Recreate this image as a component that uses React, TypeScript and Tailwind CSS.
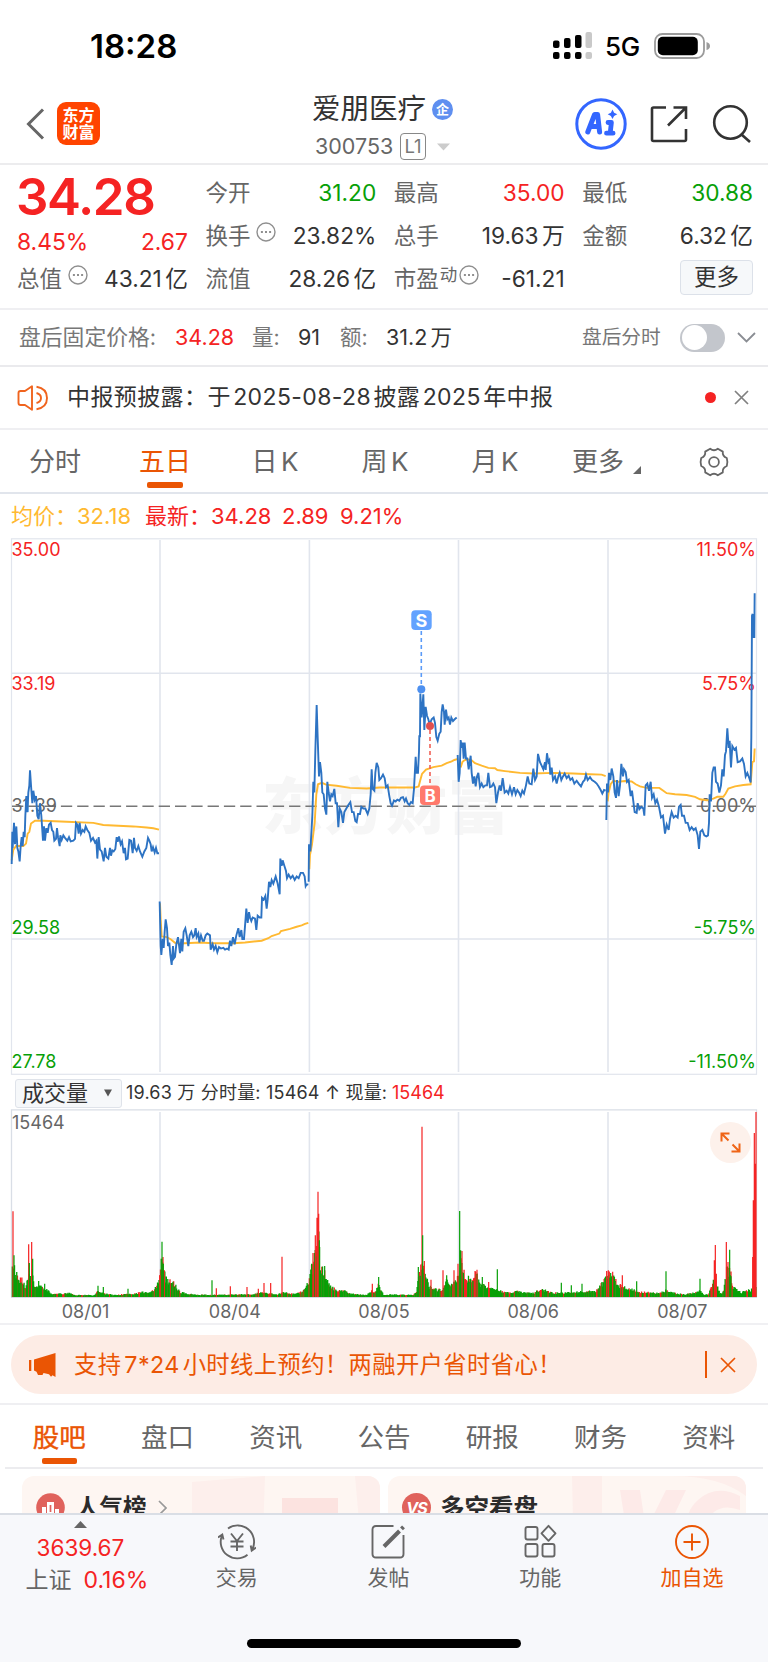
import type { ReactNode } from "react";

const RED = "#f52323";
const GREEN = "#07a007";

const chartTabs = ["分时", "五日", "日 K", "周 K", "月 K"];
const infoTabs = ["股吧", "盘口", "资讯", "公告", "研报", "财务", "资料"];
const days = ["08/01", "08/04", "08/05", "08/06", "08/07"];
const gridX = [160, 309.4, 458.5, 608];

// one entry per trading day: x offset, price line, average line
const series = [
  {
    dx: 0,
    price:
      "35,935 37,845 38,890 42,820 45,880 49,830 52,890 55,900 59,928 62,885 65,860 68,885 71,845 74,860 76,800 79,745 82,790 85,735 88,715 90,673 93,715 97,765 100,730 104,755 108,745 112,800 116,810 120,765 124,800 129,870 132,830 135,870 139,835 143,848 147,825 152,820 156,840 160,845 163,870 168,865 171,835 174,860 179,885 181,855 185,868 190,855 195,862 202,870 207,860 212,872 220,870 225,865 228,820 232,825 236,850 239,820 243,850 248,840 253,845 257,830 262,840 268,848 273,870 279,862 285,875 289,870 292,920 296,860 300,895 305,900 311,928 315,890 319,915 325,920 330,890 333,912 337,897 341,900 346,893 350,860 353,873 357,858 362,880 366,872 371,905 375,890 378,922 383,920 388,868 393,870 398,905 402,862 405,890 410,898 415,885 420,900 427,915 433,900 439,890 444,862 448,870 452,880 455,900 459,888 464,903 468,890 472,905 477,905",
    avg: "35,925 40,895 48,885 70,885 78,878 83,850 88,845 93,822 105,814 130,814 200,817 280,820 310,826 400,830 440,833 460,835 477,839",
  },
  {
    dx: 0,
    price:
      "479,1040 482,1165 484,1190 488,1145 491,1170 494,1125 497,1090 501,1115 504,1165 508,1155 511,1190 515,1218 519,1165 521,1200 525,1195 529,1160 534,1140 540,1185 544,1145 547,1180 551,1125 556,1115 560,1135 565,1165 569,1135 574,1125 579,1140 583,1135 587,1115 590,1140 595,1130 598,1155 603,1135 608,1150 612,1150 617,1135 622,1130 630,1135 632,1175 638,1160 642,1175 647,1165 652,1182 657,1168 663,1172 670,1170 675,1175 681,1172 686,1175 690,1150 694,1165 699,1140 704,1160 709,1135 715,1115 719,1140 724,1120 727,1145 732,1145 735,1110 739,1060 743,1100 747,1070 750,1085 754,1095 758,1085 765,1088 769,1120 773,1080 779,1085 784,1085 786,1030 791,1035 796,1025 800,1060 803,1035 807,985 811,1000 815,980 820,990 827,970 833,990 839,1020 841,920 845,940 848,925 853,940 858,955 861,975 866,965 872,975 878,968 884,980 890,970 896,975 902,960 909,960 914,970 917,997 920,992 925,993",
    avg: "480,1045 482,1090 485,1138 500,1140 512,1146 525,1156 540,1158 600,1155 640,1157 700,1157 735,1155 785,1150 805,1143 815,1137 838,1130 843,1123 870,1117 890,1111 905,1107 915,1103 925,1100",
  },
  {
    dx: 900,
    price:
      "26,985 27,880 31,900 34,850 37,800 40,705 43,735 46,620 50,490 53,580 57,690 60,650 64,680 67,735 71,740 75,780 79,797 82,705 86,735 90,760 94,740 98,745 103,725 107,765 111,765 115,832 119,780 124,790 129,820 133,790 139,780 145,770 151,762 156,790 161,790 166,815 170,818 174,795 180,795 184,775 190,780 196,780 203,795 208,780 212,740 215,670 218,725 223,730 226,680 230,652 235,665 238,700 243,695 249,685 254,695 258,720 263,715 268,745 272,765 276,772 282,757 287,760 292,755 298,758 303,750 309,748 314,760 318,752 323,765 328,770 333,762 338,765 342,725 347,635 350,680 354,680 357,620 358,575 360,580 361,458 365,525 370,460 373,560 377,495 381,520 385,530 389,545 395,530 401,525 405,540 409,580 413,590 418,570 422,565 425,510 428,488 432,510 434,545 438,503 442,530 446,525 450,545 454,525 459,535 464,530 470,525",
    avg: "28,950 30,910 36,880 44,820 49,740 54,712 66,708 78,713 110,716 150,722 200,724 240,721 280,721 345,721 356,718 361,700 366,683 378,671 400,664 425,660 440,653 455,648 463,644 474,641",
  },
  {
    dx: 900,
    price:
      "473,630 476,705 479,680 482,588 485,610 488,595 491,640 494,595 498,640 502,640 506,670 512,632 515,680 519,710 523,690 527,718 531,690 535,680 540,720 545,710 550,720 556,715 561,715 565,680 570,720 575,718 580,710 585,720 589,765 594,735 599,715 603,730 608,695 614,735 620,730 625,738 630,720 636,740 642,720 647,740 652,728 657,735 662,745 667,730 672,738 678,715 683,690 688,710 695,712 700,668 705,700 710,690 714,627 720,650 725,660 730,670 735,650 737,672 741,625 745,650 748,645 751,685 755,665 759,700 765,690 770,710 775,690 779,680 784,700 789,690 794,682 800,695 806,688 811,700 817,695 823,710 830,702 836,710 843,718 849,705 854,700 858,685 863,700 870,692 876,700 884,705 890,710 896,718 902,728 907,738 912,728 917,730",
    avg: "482,665 487,650 493,645 502,642 515,645 525,653 545,660 565,666 585,667 592,672 615,675 660,680 700,682 760,680 820,682 870,684 905,685 917,689",
  },
  {
    dx: 1560,
    price:
      "259,812 261,710 264,735 267,680 271,700 275,668 280,690 284,735 288,750 291,700 296,745 300,715 304,655 309,690 312,670 317,678 321,705 326,700 332,745 336,730 340,760 344,790 350,792 353,765 358,782 364,775 370,780 373,800 377,715 382,710 387,730 392,705 396,750 401,740 406,765 411,755 417,775 423,805 429,800 435,850 440,825 446,840 450,810 455,790 461,805 467,800 473,805 477,775 482,770 486,800 492,800 497,820 503,820 509,840 515,832 521,840 527,835 533,855 537,893 541,845 547,840 553,855 559,858 564,855 567,820 569,740 573,760 577,680 581,665 585,665 588,705 593,710 598,735 603,715 607,670 611,690 615,630 618,620 622,555 626,610 629,590 633,665 637,605 643,615 648,610 653,650 660,648 667,640 672,655 677,690 682,680 688,695 692,707 694,580 696,240 698,235 700,300 703,300 704,177",
    avg: "263,760 266,735 272,712 280,702 295,705 315,703 335,704 347,712 360,718 380,722 418,722 430,730 440,737 465,740 500,742 525,747 540,754 560,757 580,752 592,747 610,747 617,738 625,724 645,718 670,714 692,712 697,650 702,648 704,612",
  },
];

// volume envelope [x, height]
const envelope = [
  [36, 75], [42, 120], [47, 75], [54, 55], [66, 52], [76, 30], [82, 60], [90, 60], [98, 90], [103, 40], [118, 32],
  [135, 28], [145, 18], [160, 9], [210, 12], [225, 6], [285, 6], [295, 22], [305, 12], [320, 10], [340, 6], [400, 10],
  [430, 15], [445, 12], [460, 22], [470, 30], [480, 60], [486, 130], [492, 80], [500, 50], [520, 45], [535, 22],
  [545, 14], [580, 8], [630, 6], [700, 8], [760, 8], [780, 14], [830, 8], [850, 14], [880, 10], [900, 15], [915, 22],
  [925, 45], [933, 85], [945, 120], [955, 200], [962, 80], [972, 85], [980, 50], [990, 35], [1010, 20], [1030, 20],
  [1050, 10], [1100, 6], [1115, 20], [1125, 12], [1135, 40], [1142, 25], [1150, 8], [1240, 6], [1250, 20], [1258, 70],
  [1268, 110], [1275, 70], [1290, 30], [1310, 22], [1330, 25], [1340, 50], [1355, 35], [1375, 60], [1382, 120],
  [1392, 75], [1410, 50], [1430, 75], [1440, 40], [1470, 25], [1500, 20], [1530, 12], [1545, 18], [1570, 14],
  [1600, 12], [1625, 25], [1650, 15], [1680, 12], [1740, 16], [1790, 20], [1810, 45], [1825, 70], [1840, 60],
  [1860, 35], [1890, 25], [1920, 16], [1940, 14], [1980, 12], [2000, 22], [2010, 15], [2050, 8], [2090, 14],
  [2100, 20], [2110, 8], [2125, 8], [2140, 50], [2150, 40], [2160, 12], [2170, 15], [2180, 80], [2190, 90],
  [2200, 30], [2225, 14], [2240, 20], [2258, 25], [2268, 30],
];

const redSpikes = [
  [39, 257], [86, 158], [95, 165], [489, 120], [493, 80], [480, 65], [691, 32], [649, 26], [741, 30], [775, 25], [792, 42],
  [812, 42], [846, 121], [939, 132], [946, 185], [951, 238], [954, 316], [956, 250], [1117, 40], [1266, 511],
  [1273, 108], [1293, 52], [1329, 80], [1362, 80], [1374, 100], [1386, 138], [1431, 82], [1466, 45], [1820, 78], [1825, 80],
  [1838, 76], [1867, 65], [2143, 110], [2146, 156], [2149, 70], [2179, 165], [2184, 105], [2258, 120], [2260, 290], [2263, 492],
  [2266, 400], [2268, 555],
];
const greenSpikes = [
  [42, 125], [88, 102], [98, 115], [116, 48], [134, 40], [294, 34], [310, 30], [384, 25], [486, 166], [490, 100], [636, 50],
  [935, 100], [958, 170], [974, 93], [1136, 60], [1255, 90], [1268, 185], [1340, 65], [1379, 258], [1382, 140], [1447, 60], [1492, 83],
  [1684, 43], [1714, 35], [1746, 40], [1832, 72], [1910, 47], [1998, 77], [2100, 55], [2189, 142], [2193, 62],
];

function noise(i: number) {
  const s = Math.sin(i * 12.9898) * 43758.5453;
  return s - Math.floor(s);
}

function buildVolume() {
  let red = "";
  let green = "";
  let k = 0;
  for (let x = 37; x < 2268; x += 2.2) {
    while (k < envelope.length - 2 && envelope[k + 1][0] < x) k++;
    const [x0, h0] = envelope[k];
    const [x1, h1] = envelope[k + 1];
    const base = h0 + ((h1 - h0) * (x - x0)) / (x1 - x0);
    const h = Math.max(4, base * (0.7 + 0.45 * noise(x)));
    const bar = `M${(x / 3).toFixed(2)} 188v-${(h / 3).toFixed(1)}`;
    if (noise(x + 7) < 0.35) red += bar;
    else green += bar;
  }
  return { red, green };
}

const volume = buildVolume();
const toBars = (list: number[][]) => list.map(([x, h]) => `M${(x / 3).toFixed(2)} 188v-${(h / 3).toFixed(1)}`).join("");

function MoreDots() {
  return (
    <svg className="h-5 w-5 shrink-0" viewBox="0 0 20 20" fill="none">
      <circle cx="10" cy="10" r="9" stroke="#8f8f8f" strokeWidth="1.4" />
      <path d="M4.9 10h2M9 10h2M13.1 10h2" stroke="#8f8f8f" strokeWidth="1.8" />
    </svg>
  );
}

function Stat({ label, value, color = "text-[#333]", extra }: { label: string; value: string; color?: string; extra?: ReactNode }) {
  return (
    <div className="flex h-[43px] items-center justify-between whitespace-nowrap">
      <div className="flex items-center">
        <span className="text-[22.5px] text-[#666]">{label}</span>
        {extra}
      </div>
      <span className={`text-[22.7px] [word-spacing:-3px] ${color}`}>{value}</span>
    </div>
  );
}

function StatusBar() {
  return (
    <div className="flex h-[92px] items-center pl-[90px]">
      <span className="w-[463px] text-[33px] font-semibold text-black">18:28</span>
      <svg className="h-7 w-10" viewBox="0 0 40 28">
        <g fill="#000">
          <rect x="0" y="8.5" width="6.5" height="7.5" rx="2" />
          <rect x="11" y="6" width="6.5" height="10" rx="2" />
          <rect x="22" y="3" width="6.5" height="13" rx="2" />
          <rect x="0" y="20" width="6.5" height="7" rx="2" />
          <rect x="11" y="20" width="6.5" height="7" rx="2" />
          <rect x="22" y="20" width="6.5" height="7" rx="2" />
        </g>
        <g fill="#c9c9c9">
          <rect x="32.5" y="0" width="6.5" height="16" rx="2" />
          <rect x="32.5" y="20" width="6.5" height="7" rx="2" />
        </g>
      </svg>
      <span className="ml-[12px] w-[49px] pt-[2px] text-[26px] font-medium tracking-[-0.4px] text-black">5G</span>
      <svg className="h-[26px] w-[58px]" viewBox="0 0 58 26">
        <rect x="1" y="1" width="49" height="24" rx="7.5" fill="none" stroke="#9b9b9b" strokeWidth="1.8" />
        <rect x="3.8" y="3.8" width="40" height="18.4" rx="5" />
        <path d="M52.5 9v8q3.5-1 3.5-4t-3.5-4z" fill="#9b9b9b" />
      </svg>
    </div>
  );
}

function Header() {
  return (
    <header className="flex h-[73px] items-start border-b-2 border-[#ececee] pl-[26px]">
      <svg className="mt-[16px] h-8 w-5" viewBox="0 0 20 32" fill="none">
        <path d="M17 1.5 2.5 16 17 30.5" stroke="#666" strokeWidth="3" />
      </svg>
      <div className="ml-[11px] mt-[10px] flex h-[43px] w-[43px] flex-col items-center justify-center rounded-[9px] bg-[#ff4400] pt-[1px] text-[16px] font-bold leading-[17.5px] text-white">
        <span>东方</span>
        <span>财富</span>
      </div>
      <div className="ml-[212px] w-[263px]">
        <div className="flex h-[35px] items-center">
          <span className="text-[28.5px] text-[#333]">爱朋医疗</span>
          <span className="ml-[6px] flex h-[21px] w-[21px] items-center justify-center rounded-full bg-[#5f8ff0] text-[13px] font-bold text-white">
            企
          </span>
        </div>
        <div className="mt-[5px] flex h-[29px] items-center pl-[3px]">
          <span className="w-[85px] text-[21.5px] text-[#666]">300753</span>
          <span className="flex h-[27px] w-[26px] items-center justify-center rounded-[4px] border-[1.5px] border-[#888] text-[18.5px] text-[#777]">
            L1
          </span>
          <svg className="ml-[11px] h-2 w-[13px]" viewBox="0 0 13 8">
            <path d="M0 .5h13L6.5 7.5z" fill="#ccc" />
          </svg>
        </div>
      </div>
      <svg className="mt-[6px] h-[52px] w-[52px]" viewBox="0 0 52 52" fill="none">
        <circle cx="26" cy="26" r="24.2" stroke="#3366ff" strokeWidth="3" />
        <path d="M12.8 34 19.6 16.500h3l2 17.500M16.500 28.600h7.200" stroke="#3366ff" strokeWidth="5" strokeLinejoin="round" strokeLinecap="round" />
        <path d="M33 24.500h3.400l-1.200 10.500M31.500 35.200h6.600" stroke="#3366ff" strokeWidth="4.800" strokeLinejoin="round" strokeLinecap="round" />
        <path d="m37.500 11.500 1.600 3.200 3.200 1.600-3.200 1.600-1.600 3.200-1.600-3.200-3.200-1.600 3.200-1.600z" fill="#3366ff" />
      </svg>
      <svg className="ml-[23px] mt-[13px] h-[38px] w-[38px]" viewBox="0 0 38 38" fill="none" stroke="#333" strokeWidth="2.6">
        <path d="M16 2.5H3.5Q2 2.5 2 4v30.500q0 1.500 1.500 1.500h31q1.500 0 1.500-1.500V24" />
        <path d="M23.500 2.500H36V14M36 2.500 18 20.500" />
      </svg>
      <svg className="ml-[24px] mt-[12px] h-10 w-10" viewBox="0 0 40 40" fill="none" stroke="#333" strokeWidth="2.6">
        <circle cx="18.500" cy="18.500" r="16.300" />
        <path d="m29.500 30.500 8.500 7.500" />
      </svg>
    </header>
  );
}

function Quote() {
  return (
    <section className="grid h-[145px] grid-cols-4 gap-[17.500px] border-b-2 border-[#efeff2] pl-[17px] pr-[15px] pt-[7px]">
      <div className="flex flex-col">
        <span className="-ml-[1px] h-[51px] text-[51px] font-semibold leading-[49px] tracking-[-1.400px] text-[#f52323]">34.28</span>
        <div className="flex h-[35px] items-center justify-between pt-[4px] text-[22.800px] text-[#f52323]">
          <span>8.45%</span>
          <span>2.67</span>
        </div>
        <Stat
          label="总值"
          value="43.21 亿"
          extra={
            <span className="mb-[10px] ml-[6px]">
              <MoreDots />
            </span>
          }
        />
      </div>
      <div>
        <Stat label="今开" value="31.20" color="text-[#07a007]" />
        <Stat
          label="换手"
          value="23.82%"
          extra={
            <span className="mb-[10px] ml-[6px]">
              <MoreDots />
            </span>
          }
        />
        <Stat label="流值" value="28.26 亿" />
      </div>
      <div>
        <Stat label="最高" value="35.00" color="text-[#f52323]" />
        <Stat label="总手" value="19.63 万" />
        <Stat
          label="市盈"
          value="-61.21"
          extra={
            <span className="mb-[10px] ml-[1px] flex items-center gap-[2px] text-[17.500px] text-[#666]">
              动
              <MoreDots />
            </span>
          }
        />
      </div>
      <div>
        <Stat label="最低" value="30.88" color="text-[#07a007]" />
        <Stat label="金额" value="6.32 亿" />
        <div className="flex justify-end pt-[2px]">
          <button type="button" className="h-[35px] w-[73px] rounded-[4px] border-[1.500px] border-[#dce1e9] bg-[#f6f8fa] text-[22.500px] text-[#333]">
            更多
          </button>
        </div>
      </div>
    </section>
  );
}

function AfterHours() {
  return (
    <section className="flex h-[57px] items-center whitespace-nowrap border-b-2 border-[#eaeaed] pl-[19px] text-[21.500px] text-[#333] [word-spacing:-3px]">
      <span className="w-[156px] text-[21.800px] text-[#777]">盘后固定价格:</span>
      <span className="w-[77px] text-[#f52323]">34.28</span>
      <span className="w-[46px] text-[#777]">量:</span>
      <span className="w-[42px]">91</span>
      <span className="w-[46px] text-[#777]">额:</span>
      <span className="w-[196px]">31.2 万</span>
      <span className="w-[98px] text-[19.700px] text-[#777]">盘后分时</span>
      <span className="flex h-[28px] w-[45px] items-center rounded-full bg-[#c3c6cc] p-[1.500px]">
        <span className="h-[25px] w-[25px] rounded-full bg-white" />
      </span>
      <svg className="ml-[12px] h-3 w-[19px]" viewBox="0 0 19 12" fill="none">
        <path d="m1 1 8.500 8.500L18 1" stroke="#8a8d93" strokeWidth="1.800" />
      </svg>
    </section>
  );
}

function Notice() {
  return (
    <section className="flex h-[63px] items-center whitespace-nowrap border-b-2 border-[#efeff2] pl-[17px]">
      <svg className="h-[26px] w-8" viewBox="0 0 32 26" fill="none" stroke="#f0641e" strokeWidth="1.900">
        <path d="M15 1.300v23.400L8 20H3.500Q1.500 20 1.500 18V8q0-2 2-2H8z" strokeLinejoin="round" />
        <path d="M19.500 8q4.500 1.200 4.500 5t-4.500 5M19.500 1.800Q30 3.500 30 13t-10.500 11.200" />
      </svg>
      <span className="ml-[18px] w-[638px] text-[23px] tracking-[0.400px] text-[#333] [word-spacing:-4.500px]">
        中报预披露：于 2025-08-28 披露 2025 年中报
      </span>
      <span className="h-[11px] w-[11px] rounded-full bg-[#f52323]" />
      <svg className="ml-[18px] h-[15px] w-[15px]" viewBox="0 0 15 15">
        <path d="m1 1 13 13M14 1 1 14" stroke="#808080" strokeWidth="1.700" />
      </svg>
    </section>
  );
}

function ChartTabs() {
  return (
    <nav className="flex h-[64px] items-center border-b-2 border-[#e1e5ec] pt-[2px] text-[26px] text-[#666] [word-spacing:-4px]">
      {chartTabs.map((tab) => (
        <div key={tab} className={tab === "五日" ? "relative w-[110px] text-center text-[#ea5504]" : "w-[110px] text-center"}>
          {tab}
          {tab === "五日" && <span className="absolute -bottom-[13px] left-[37px] h-[6px] w-[36px] rounded-[2px] bg-[#ea5504]" />}
        </div>
      ))}
      <div className="ml-[22px] flex items-end">
        更多
        <svg className="mb-[1px] ml-[9px] h-2 w-2" viewBox="0 0 8 8">
          <path d="M8 0v8H0z" fill="#666" />
        </svg>
      </div>
      <svg className="ml-[57px] h-[30px] w-[32px]" viewBox="0 0 32 30" fill="none" stroke="#666" strokeWidth="1.800">
        <path d="M12.200 1.700Q16 4.700 19.800 1.700L24.800 4.600Q24.200 9.200 28.800 11Q30 15 28.800 19Q24.200 20.800 24.800 25.400L19.800 28.300Q16 25.300 12.200 28.300L7.200 25.400Q7.800 20.800 3.200 19Q2 15 3.200 11Q7.800 9.200 7.200 4.600Z" strokeLinejoin="round" />
        <circle cx="16" cy="15" r="4.900" />
      </svg>
    </nav>
  );
}

function PriceChart() {
  return (
    <svg className="block h-[539px] w-[768px]" viewBox="0 538 768 539" fontSize="18">
      <text x="262" y="829" fontSize="61" fontWeight="900" letterSpacing="1" fill="#f6f6f6">
        东方财富
      </text>
      <g stroke="#e1e5ed" strokeWidth="1.600" fill="none">
        <rect x="11.500" y="538.800" width="745" height="535.500" strokeWidth="1.200" />
        {gridX.map((x) => (
          <path key={x} d={`M${x} 540V1072`} />
        ))}
        <path d="M12 673.200H756M12 939H756" />
      </g>
      <path d="M12 806.300H756" stroke="#777" strokeWidth="1.500" strokeDasharray="11.300 5" />
      <g fill={RED}>
        <text x="11.500" y="556">35.00</text>
        <text x="11.500" y="690">33.19</text>
        <text x="756" y="556" textAnchor="end">11.50%</text>
        <text x="756" y="690" textAnchor="end">5.75%</text>
      </g>
      <g fill="#666">
        <text x="11.500" y="812">31.39</text>
        <text x="756" y="812" textAnchor="end">0.00%</text>
      </g>
      <g fill={GREEN}>
        <text x="11.500" y="934">29.58</text>
        <text x="11.500" y="1068">27.78</text>
        <text x="756" y="934" textAnchor="end">-5.75%</text>
        <text x="756" y="1068" textAnchor="end">-11.50%</text>
      </g>
      <g transform="translate(0 530) scale(0.33333 0.35714)" fill="none">
        {series.map((s, i) => (
          <g key={days[i]} transform={`translate(${s.dx} 0)`}>
            <polyline points={s.avg} stroke="#ffb931" strokeWidth="1.900" vectorEffect="non-scaling-stroke" />
            <polyline points={s.price} stroke="#2d73c3" strokeWidth="1.900" vectorEffect="non-scaling-stroke" />
          </g>
        ))}
      </g>
      {/* trade markers */}
      <path d="M421.300 631V685" stroke="#5b9bf8" strokeWidth="1.600" strokeDasharray="4 3" />
      <circle cx="421.300" cy="689.300" r="4" fill="#4d90f0" />
      <rect x="411.300" y="610.300" width="20.400" height="19.600" rx="4" fill="#62a2ff" />
      <text x="421.500" y="626.600" textAnchor="middle" fontSize="18" fontWeight="700" fill="#fff">S</text>
      <path d="M430 730V785" stroke="#f06055" strokeWidth="1.600" strokeDasharray="4 3" />
      <circle cx="430" cy="726" r="4" fill="#e2504f" />
      <rect x="420" y="785.500" width="20" height="19.600" rx="4" fill="#ff796c" />
      <text x="430" y="801.500" textAnchor="middle" fontSize="17" fontWeight="700" fill="#fff">B</text>
    </svg>
  );
}

function VolumeChart() {
  return (
    <div className="relative h-[189px]">
      <svg className="block h-[189px] w-[768px]" viewBox="0 0 768 189" fontSize="18">
        <g stroke="#e1e5ed" strokeWidth="1.600" fill="none">
          <path d="M11.500 188V.8H756.500V188" strokeWidth="1.300" stroke="#d9dee6" />
          {gridX.map((x) => (
            <path key={x} d={`M${x} 3V188`} />
          ))}
          <path d="M11 188.300H757" stroke="#d5d9e0" />
        </g>
        <text x="12" y="20" fill="#666">15464</text>
        <path d={volume.red} stroke={RED} strokeWidth="1.300" />
        <path d={volume.green} stroke={GREEN} strokeWidth="1.300" />
        <path d={toBars(redSpikes)} stroke={RED} strokeWidth="1.200" />
        <path d={toBars(greenSpikes)} stroke={GREEN} strokeWidth="1.200" />
      </svg>
      <div className="absolute left-[710px] top-[13px] flex h-[41px] w-[41px] items-center justify-center rounded-full bg-[#fdf1eb]">
        <svg className="h-[21px] w-[21px]" viewBox="0 0 21 21" fill="none" stroke="#ef6517" strokeWidth="2">
          <path d="M1.500 9.500V1.500H9.500M1.500 1.500 8.500 8.500M12.500 12.500l7 7M19.500 11.500v8H11.500" />
        </svg>
      </div>
    </div>
  );
}

function Banner() {
  return (
    <div className="h-[80px] border-b-2 border-[#efeff2] px-[11px] pt-[10px]">
      <div className="flex h-[59px] items-center whitespace-nowrap rounded-full bg-[#fdece5] pl-[17px] text-[#ea5504]">
        <svg className="h-[26px] w-7" viewBox="0 0 28 26" fill="#ea5504">
          <path d="M27.500 1v24l-3-1.800-1.500 1.500-2-2.500-5.500-1.200-1 2H10l-1.500-3.200L6 18.500V7.500z" />
          <rect x="1" y="8" width="2.300" height="11" />
        </svg>
        <span className="ml-[18px] w-[631px] text-[23.300px] tracking-[0.400px] [word-spacing:-4px]">
          支持 7*24 小时线上预约！两融开户省时省心！
        </span>
        <span className="h-[27px] w-[1.500px] bg-[#ea5504]" />
        <svg className="ml-[13px] h-[16px] w-[16px]" viewBox="0 0 16 16">
          <path d="m1 1 14 14M15 1 1 15" stroke="#ea5504" strokeWidth="1.700" />
        </svg>
      </div>
    </div>
  );
}

function InfoTabs() {
  return (
    <nav className="mx-[5px] grid h-[64px] grid-cols-7 items-center border-b-2 border-[#ececef] pt-[3px] text-center text-[26.500px] text-[#666]">
      {infoTabs.map((tab, i) => (
        <div key={tab} className={i === 0 ? "relative text-[#ea5504] [-webkit-text-stroke:0.400px]" : ""}>
          {tab}
          {i === 0 && <span className="absolute -bottom-[13px] left-[37px] h-[6px] w-[35px] rounded-[2px] bg-[#ea5504]" />}
        </div>
      ))}
    </nav>
  );
}

function Cards() {
  return (
    <section className="flex h-[44px] gap-[8px] overflow-hidden px-[22px] pt-[7px]">
      <div className="relative h-[90px] w-[358px] overflow-hidden rounded-[12px] bg-[#fef6f2]">
        <svg className="absolute inset-0 h-[90px] w-[358px]" viewBox="0 0 358 90">
          <path d="M170 6 243 0 240 90H170zM333 0h25v90h-17z" fill="#fdefec" />
          <path d="M260 22h56v68h-56z" fill="#fce3e0" />
        </svg>
        <div className="relative flex items-center pl-[14px] pt-[17px] leading-[28px]">
          <svg className="h-[29px] w-[29px]" viewBox="0 0 29 29">
            <circle cx="14.500" cy="14.500" r="14.300" fill="#e0625c" />
            <path d="M6 14h4v11H6zM11 9h7v16h-7zM19 16h4v9h-4z" fill="#fff" />
            <path d="M14.500 12v7" stroke="#e0625c" strokeWidth="1.700" />
          </svg>
          <span className="ml-[11px] text-[23.500px] font-bold text-[#2b2b2b]">人气榜</span>
          <svg className="ml-[11px] h-4 w-[9px]" viewBox="0 0 9 16" fill="none">
            <path d="m1 1 7 7-7 7" stroke="#999" strokeWidth="1.700" />
          </svg>
        </div>
      </div>
      <div className="relative h-[90px] w-[358px] overflow-hidden rounded-[12px] bg-[#fef6f2]">
        <svg className="absolute inset-0 h-[90px] w-[358px]" viewBox="0 0 358 90">
          <path d="M184 0h30v90h-28z" fill="#fdeeeb" />
          <path d="M232 14h20l6 40 20-40h20l-36 76h-18zM352 20q-24-12-42 4t-6 40h20q-8-20 2-28t26-2z" fill="#fdeae8" />
          <path d="M284 0q48 0 74 20V0z" fill="#fdeeeb" />
        </svg>
        <div className="relative flex items-center pl-[14px] pt-[17px] leading-[28px]">
          <span className="flex h-[29px] w-[29px] items-center justify-center rounded-full bg-[#e0625c] text-[16px] font-bold italic tracking-[-1px] text-white">
            VS
          </span>
          <span className="ml-[9px] text-[24.500px] font-bold text-[#2b2b2b]">多空看盘</span>
        </div>
      </div>
    </section>
  );
}

function NavItem({ label, children, active }: { label: string; children: ReactNode; active?: boolean }) {
  return (
    <div className={active ? "flex w-[152px] flex-col items-center text-[#ea5504]" : "flex w-[152px] flex-col items-center text-[#666]"}>
      <svg className="mt-[8px] h-[38px] w-[38px]" viewBox="0 0 38 38" fill="none" stroke="currentColor" strokeWidth="1.900">
        {children}
      </svg>
      <span className="mt-[1px] text-[21px] leading-[32px]">{label}</span>
    </div>
  );
}

function BottomBar() {
  return (
    <footer className="relative flex h-[149px] border-t-2 border-[#dadee5] bg-[#f7f8fb]">
      <div className="flex w-[161px] flex-col items-center">
        <svg className="mt-[6px] h-[7px] w-[13px]" viewBox="0 0 13 7">
          <path d="M6.500 0 13 7H0z" fill="#666" />
        </svg>
        <span className="mt-[5px] text-[22.500px] leading-[30px] text-[#f52323]">3639.67</span>
        <div className="mt-[1px] flex gap-[12px] pl-[13px] text-[23px] leading-[32px]">
          <span className="text-[#666]">上证</span>
          <span className="text-[#f52323]">0.16%</span>
        </div>
      </div>
      <NavItem label="交易">
        <path d="M10 5.500A16.500 16.500 0 0 1 34.500 26M29.500 31.800A16.500 16.500 0 0 1 4 12.500M0 14.500l4.300-3 1.200 5M38 24.500l-4.300 3.200-1-5.200" />
        <path d="m13 10.500 6 7.500 6-7.500M19 18v10M12.500 18.500h13M12.500 23.500h13" />
      </NavItem>
      <NavItem label="发帖">
        <path d="M24.500 3H7Q3.500 3 3.500 6.500v24.500Q3.500 34.500 7 34.500h24q3.500 0 3.500-3.500V12" />
        <path d="M15 23.500 30.500 8" strokeWidth="4" />
        <path d="m32.500 5.800 2-2" strokeWidth="4" />
      </NavItem>
      <NavItem label="功能">
        <rect x="4.500" y="4" width="12" height="12.500" rx="2" />
        <rect x="4.500" y="21" width="12" height="12.500" rx="2" />
        <rect x="21.500" y="21" width="12" height="12.500" rx="2" />
        <path d="m27.500 2.800 7 7.500-7 7.500-7-7.500z" strokeLinejoin="round" />
      </NavItem>
      <NavItem label="加自选" active>
        <circle cx="19" cy="19" r="16" />
        <path d="M19 10.500v17M10.500 19h17" />
      </NavItem>
      <span className="absolute bottom-[14px] left-[247px] h-[9px] w-[274px] rounded-full bg-black" />
    </footer>
  );
}

export default function App() {
  return (
    <div className="h-[1662px] w-[768px] overflow-hidden bg-white font-[Inter,'Noto_Sans_CJK_SC',sans-serif] leading-none">
      <StatusBar />
      <Header />
      <Quote />
      <AfterHours />
      <Notice />
      <ChartTabs />
      <div className="flex h-[44px] items-center whitespace-nowrap pl-[11px] text-[22px] text-[#f52323]">
        <span className="w-[66px] text-[#ffb931]">均价：</span>
        <span className="w-[68px] text-[#ffb931]">32.18</span>
        <span className="w-[66px]">最新：</span>
        <span className="w-[71px]">34.28</span>
        <span className="w-[58px]">2.89</span>
        <span>9.21%</span>
      </div>
      <PriceChart />
      <div className="flex h-[32px] items-center whitespace-nowrap pl-[15px] text-[18px] text-[#333]">
        <button type="button" className="flex h-[29px] w-[107px] items-center justify-between rounded-[3px] border-[1.500px] border-[#dfe3ea] bg-[#f6f8fa] pl-[6px] pr-[9px] text-[22px]">
          成交量
          <svg className="h-2 w-2" viewBox="0 0 8 8">
            <path d="M0 .5h8L4 7.500z" fill="#555" />
          </svg>
        </button>
        <span className="ml-[4px] w-[266px] tracking-[0.200px]">19.63 万 分时量: 15464 ↑ 现量:</span>
        <span className="text-[#f52323]">15464</span>
      </div>
      <VolumeChart />
      <div className="flex h-[27px] items-center border-b-2 border-[#f0f0f3] pl-[11px] pt-[2px] text-[18px] text-[#666]">
        {days.map((d) => (
          <span key={d} className="w-[149.200px] text-center">
            {d}
          </span>
        ))}
      </div>
      <Banner />
      <InfoTabs />
      <Cards />
      <BottomBar />
    </div>
  );
}
